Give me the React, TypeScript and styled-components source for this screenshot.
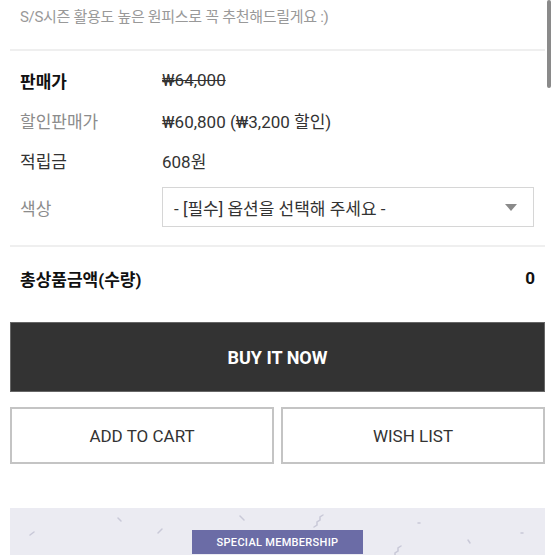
import React from "react";
import styled, { createGlobalStyle } from "styled-components";

const GlobalStyle = createGlobalStyle`
  html, body { margin: 0; padding: 0; background: #fff; }
  body {
    font-family: Roboto, "Noto Sans CJK KR", "Noto Sans", sans-serif;
    overflow: hidden;
  }
  * { box-sizing: border-box; }
`;

const Page = styled.div`
  position: relative;
  width: 555px;
  height: 555px;
  overflow: hidden;
  background: #fff;
`;

const Intro = styled.p`
  margin: 0;
  height: 49px;
  padding: 6px 20px 0;
  font-size: 15px;
  line-height: 22px;
  color: #999;
  letter-spacing: -0.3px;
`;

const Divider = styled.div`
  margin: 0 10px;
  height: 2px;
  background: #efefef;
`;

const InfoTable = styled.div`
  display: flex;
  flex-direction: column;
  padding: 9px 10px 18px 20px;
`;

const Row = styled.div<{ $gap?: number }>`
  display: grid;
  grid-template-columns: 142px 1fr;
  align-items: center;
  height: 40px;
  margin-top: ${(p) => p.$gap ?? 0}px;
`;

const Label = styled.span<{ $tone: "bold" | "muted" | "normal" }>`
  font-size: 17px;
  font-weight: ${(p) => (p.$tone === "bold" ? 700 : 400)};
  color: ${(p) => (p.$tone === "bold" ? "#111" : p.$tone === "muted" ? "#8c8c8c" : "#333")};
`;

const Value = styled.span<{ $strike?: boolean }>`
  font-size: 17px;
  color: #333;
  text-decoration: ${(p) => (p.$strike ? "line-through" : "none")};
`;

const Select = styled.div`
  display: flex;
  align-items: center;
  justify-content: space-between;
  height: 40px;
  width: 372px;
  padding: 0 16px 0 11px;
  border: 1px solid #d6d6d6;
  font-size: 17px;
  color: #333;
`;

const Arrow = styled.span`
  width: 0;
  height: 0;
  border-left: 6px solid transparent;
  border-right: 6px solid transparent;
  border-top: 7px solid #8a8a8a;
`;

const TotalRow = styled.div`
  display: flex;
  align-items: center;
  justify-content: space-between;
  height: 62px;
  padding: 0 20px;
  font-size: 17px;
  font-weight: 700;
  color: #111;
`;

const BuyButton = styled.button`
  display: flex;
  align-items: center;
  justify-content: center;
  width: 535px;
  height: 70px;
  margin: 13px 10px 0;
  background: #333;
  border: 1px solid #666;
  color: #fff;
  font-family: inherit;
  font-size: 18px;
  font-weight: 700;
`;

const ButtonRow = styled.div`
  display: grid;
  grid-template-columns: 1fr 1fr;
  gap: 7px;
  margin: 15px 10px 0;
`;

const OutlineButton = styled.button`
  height: 57px;
  background: #fff;
  border: 2px solid #c4c4c4;
  color: #333;
  font-family: inherit;
  font-size: 17px;
`;

const Banner = styled.div`
  position: relative;
  display: flex;
  justify-content: center;
  margin: 44px 10px 0;
  height: 80px;
  padding-top: 22px;
  background: #ebebf2;
`;

const Badge = styled.div`
  width: 171px;
  height: 24px;
  background: #6b6ca6;
  color: #fff;
  font-size: 11px;
  font-weight: 500;
  letter-spacing: 0.3px;
  display: flex;
  align-items: center;
  justify-content: center;
`;

const Deco = styled.svg`
  position: absolute;
  left: 0;
  top: 0;
  width: 535px;
  height: 80px;
  pointer-events: none;
`;

const Scrollbar = styled.div`
  position: absolute;
  top: 0;
  right: 4px;
  width: 4px;
  height: 88px;
  border-radius: 2px;
  background: #8a8a8a;
`;

export default function App() {
  return (
    <Page>
      <GlobalStyle />
      <Intro>S/S시즌 활용도 높은 원피스로 꼭 추천해드릴게요 :)</Intro>
      <Divider />
      <InfoTable>
        <Row>
          <Label $tone="bold">판매가</Label>
          <Value $strike>₩64,000</Value>
        </Row>
        <Row>
          <Label $tone="muted">할인판매가</Label>
          <Value>₩60,800 (₩3,200 할인)</Value>
        </Row>
        <Row>
          <Label $tone="normal">적립금</Label>
          <Value>608원</Value>
        </Row>
        <Row $gap={7}>
          <Label $tone="muted">색상</Label>
          <Select>
            <span>- [필수] 옵션을 선택해 주세요 -</span>
            <Arrow />
          </Select>
        </Row>
      </InfoTable>
      <Divider />
      <TotalRow>
        <span>총상품금액(수량)</span>
        <span>0</span>
      </TotalRow>
      <BuyButton>BUY IT NOW</BuyButton>
      <ButtonRow>
        <OutlineButton>ADD TO CART</OutlineButton>
        <OutlineButton>WISH LIST</OutlineButton>
      </ButtonRow>
      <Banner>
        <Deco viewBox="0 0 535 80">
          <g stroke="#c9c9d8" strokeWidth="1.5" fill="none" strokeLinecap="round">
            <path d="M20 27 l4 -3" />
            <path d="M108 10 l3 3" />
            <path d="M148 25 l4 -4" />
            <path d="M230 8 l4 4" />
            <path d="M304 19 l3 -2 l0 -3 l3 -2 l0 -3 l3 -2" />
            <path d="M408 15 l2 0" />
            <path d="M382 50 l3 -2 l0 -3 l3 -2 l0 -3 l3 -2" />
            <path d="M458 32 l2 3" />
            <path d="M511 25 l2 0" />
          </g>
        </Deco>
        <Badge>SPECIAL MEMBERSHIP</Badge>
      </Banner>
      <Scrollbar />
    </Page>
  );
}
